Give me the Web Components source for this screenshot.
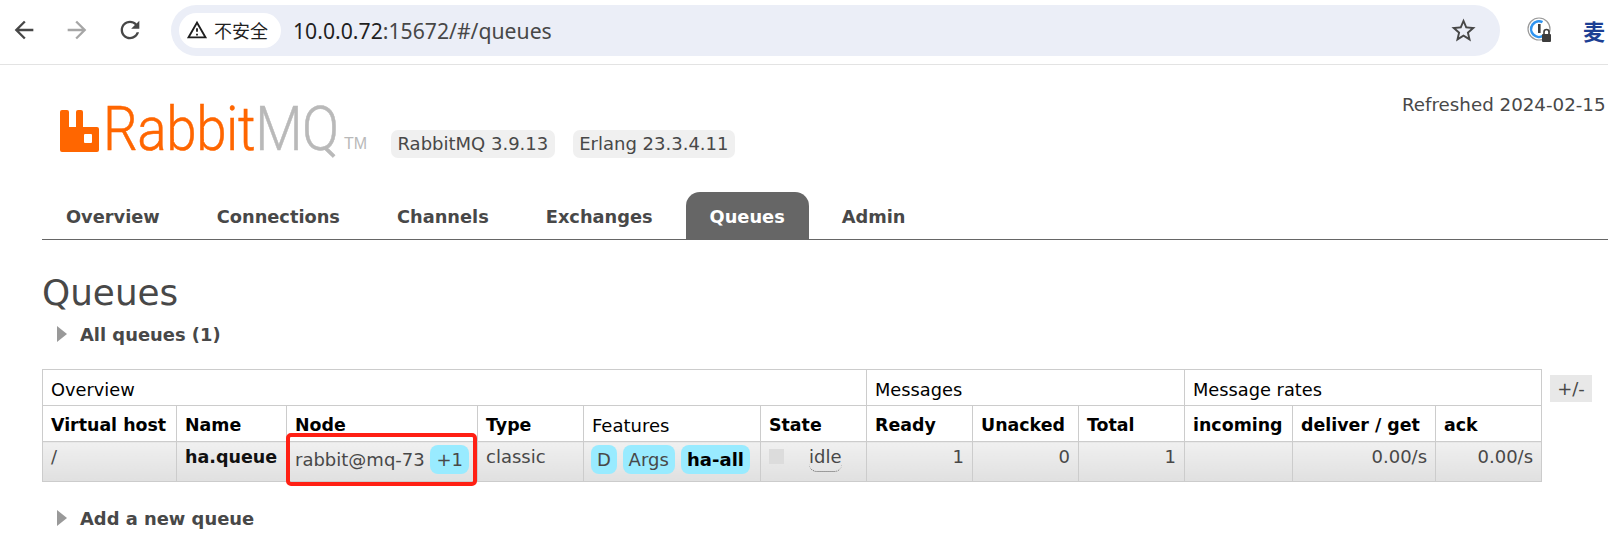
<!DOCTYPE html>
<html>
<head>
<meta charset="utf-8">
<title>RabbitMQ Management</title>
<style>
  html, body { margin: 0; padding: 0; width: 1608px; height: 541px; overflow: hidden; background: #fff; }
  body { font-family: "DejaVu Sans", sans-serif; font-size: 18px; color: #484848; }
</style>
</head>
<body>
<browser-bar url-host="10.0.0.72" url-rest=":15672/#/queues"></browser-bar>
<rmq-header>
  <span slot="refreshed">Refreshed 2024-02-15</span>
  <version-badge>RabbitMQ 3.9.13</version-badge>
  <version-badge>Erlang 23.3.4.11</version-badge>
</rmq-header>
<rmq-tabs>
  <tab-link>Overview</tab-link>
  <tab-link>Connections</tab-link>
  <tab-link>Channels</tab-link>
  <tab-link>Exchanges</tab-link>
  <tab-link active>Queues</tab-link>
  <tab-link>Admin</tab-link>
</rmq-tabs>
<rmq-page heading="Queues">
  <section-toggle>All queues (1)</section-toggle>
  <queue-table></queue-table>
  <section-toggle class="add">Add a new queue</section-toggle>
</rmq-page>

<script>
const ICONS = {
  back: 'M20 11H7.83l5.59-5.59L12 4l-8 8 8 8 1.41-1.41L7.83 13H20v-2z',
  reload: 'M17.65 6.35C16.2 4.9 14.21 4 12 4c-4.42 0-7.99 3.58-7.99 8s3.57 8 7.99 8c3.73 0 6.84-2.55 7.73-6h-2.08c-.82 2.33-3.04 4-5.65 4-3.31 0-6-2.69-6-6s2.69-6 6-6c1.66 0 3.14.69 4.22 1.78L13 11h7V4l-2.35 2.35z',
  warn: 'M1 21h22L12 2 1 21zm3.47-2L12 5.99 19.53 19H4.47zM11 16h2v2h-2zm0-6h2v4h-2z',
  star: 'M22 9.24l-7.19-.62L12 2 9.19 8.63 2 9.24l5.46 4.73L5.82 21 12 17.27 18.18 21l-1.63-7.03L22 9.24zM12 15.4l-3.76 2.27 1-4.28-3.32-2.88 4.38-.38L12 6.1l1.71 4.04 4.38.38-3.32 2.88 1 4.28L12 15.4z'
};

class BrowserBar extends HTMLElement {
  constructor() {
    super();
    this.attachShadow({mode: "open"});
    this.shadowRoot.innerHTML = `
      <style>
        :host { display: flex; align-items: center; height: 65px; box-sizing: border-box; border-bottom: 1px solid #e3e3e3; background: #fff; font-family: "Noto Sans", sans-serif; padding-bottom: 4px; }
        svg { display: block; fill: #474747; }
        .nav { display: flex; gap: 25px; margin-left: 10px; margin-right: 22px; width: 139px; flex: none; }
        .nav .fwd { transform: scaleX(-1); fill: #a6a6a6; }
        .pill { width: 1329px; height: 51px; flex: none; box-sizing: border-box; background: #ebeef7; border-radius: 26px; display: flex; align-items: center; padding: 0 22px 0 8px; }
        .chip { display: flex; align-items: center; gap: 6px; height: 35px; width: 102px; box-sizing: border-box; padding-left: 7px; background: #fff; border-radius: 18px; font: 18px "Noto Sans CJK SC", sans-serif; color: #1f1f1f; flex: none; }
        .chip svg { fill: #1f1f1f; }
        .url { margin-left: 12px; font-size: 21.2px; color: #474747; white-space: nowrap; }
        .url b { font-weight: 400; color: #1f1f1f; }
        .star { margin-left: auto; fill: #474747; }
        .ext { margin-left: 27px; flex: none; }
        .mai { margin-left: 30px; font: 700 22px "Noto Sans CJK SC", serif; color: #1c3f94; flex: none; }
      </style>
      <div class="nav">
        <svg width="28" height="28" viewBox="0 0 24 24"><path d="${ICONS.back}"/></svg>
        <svg class="fwd" width="28" height="28" viewBox="0 0 24 24"><path d="${ICONS.back}"/></svg>
        <svg width="28" height="28" viewBox="0 0 24 24"><path d="${ICONS.reload}"/></svg>
      </div>
      <div class="pill">
        <div class="chip"><svg width="22" height="22" viewBox="0 0 24 24"><path d="${ICONS.warn}"/></svg><span>不安全</span></div>
        <div class="url"><b>${this.getAttribute("url-host")}</b>${this.getAttribute("url-rest")}</div>
        <svg class="star" width="29" height="29" viewBox="0 0 24 24"><path d="${ICONS.star}"/></svg>
      </div>
      <svg class="ext" width="26" height="26" viewBox="0 0 26 26" style="fill:none">
        <circle cx="12" cy="12" r="11" stroke="#9a9a9a" stroke-width="1.2"/>
        <path d="M15.5 5.2A7.8 7.8 0 1 0 16.5 18.5" stroke="#2f94f0" stroke-width="2.6"/>
        <rect x="11" y="7" width="2.6" height="9" fill="#3c3c3c"/>
        <rect x="15" y="17" width="9" height="8" rx="1" fill="#3c3c3c"/>
        <path d="M17 17v-2a2.5 2.5 0 0 1 5 0v2" stroke="#3c3c3c" stroke-width="1.6"/>
      </svg>
      <span class="mai">麦</span>
    `;
  }
}
customElements.define("browser-bar", BrowserBar);

class VersionBadge extends HTMLElement {
  constructor() {
    super();
    this.attachShadow({mode: "open"});
    this.shadowRoot.innerHTML = `
      <style>
        :host { display: block; height: 28px; line-height: 28px; padding: 0 6.5px; background: #f0f0f0; border-radius: 7px; color: #484848; white-space: nowrap; }
      </style>
      <slot></slot>
    `;
  }
}
customElements.define("version-badge", VersionBadge);

class RmqHeader extends HTMLElement {
  constructor() {
    super();
    this.attachShadow({mode: "open"});
    this.shadowRoot.innerHTML = `
      <style>
        :host { display: flex; height: 127px; box-sizing: border-box; padding-left: 60px; position: relative; white-space: nowrap; }
        .logo { display: flex; align-items: flex-end; width: 331px; height: 87px; flex: none; }
        .logo svg { display: block; flex: none; }
        .word { font: 300 62px Roboto, sans-serif; line-height: 46px; height: 46px; margin-left: 4px; width: 237px; flex: none; display: block; transform: scaleX(.883); transform-origin: 0 100%; color: #ff6600; letter-spacing: -.5px; -webkit-text-stroke: .5px; }
        .word i { font-style: normal; color: #b9b9b9; }
        .tm { font: 16px "Liberation Sans", sans-serif; color: #b9b9b9; margin-left: 4px; line-height: 16px; }
        .badges { display: flex; gap: 18px; margin-top: 65px; align-self: flex-start; }
        .refreshed { margin-left: auto; padding-top: 29px; width: 206px; font-size: 18.25px; color: #484848; }
      </style>
      <div class="logo">
        <svg width="39" height="42" viewBox="0 0 39 42"><path fill="#ff6600" fill-rule="evenodd" d="M2 0h5a2 2 0 0 1 2 2v15h7V2a2 2 0 0 1 2-2h3a2 2 0 0 1 2 2v15h14a2 2 0 0 1 2 2v21a2 2 0 0 1-2 2H2a2 2 0 0 1-2-2V2a2 2 0 0 1 2-2zM25 24a1 1 0 0 0-1 1v7a1 1 0 0 0 1 1h6a1 1 0 0 0 1-1v-7a1 1 0 0 0-1-1z"/></svg>
        <span class="word">Rabbit<i>MQ</i></span>
        <span class="tm">TM</span>
      </div>
      <div class="badges"><slot></slot></div>
      <div class="refreshed"><slot name="refreshed"></slot></div>
    `;
  }
}
customElements.define("rmq-header", RmqHeader);

class TabLink extends HTMLElement {
  constructor() {
    super();
    this.attachShadow({mode: "open"});
    this.shadowRoot.innerHTML = `
      <style>
        :host { display: block; height: 47px; line-height: 50px; padding: 0 24px; font-size: 17.8px; font-weight: 700; color: #484848; border-radius: 14px 14px 0 0; }
        :host([active]) { background: #666; color: #fff; }
      </style>
      <slot></slot>
    `;
  }
}
customElements.define("tab-link", TabLink);

class RmqTabs extends HTMLElement {
  constructor() {
    super();
    this.attachShadow({mode: "open"});
    this.shadowRoot.innerHTML = `
      <style>
        :host { display: flex; gap: 9px; margin-left: 42px; height: 48px; box-sizing: border-box; border-bottom: 1px solid #666; }
      </style>
      <slot></slot>
    `;
  }
}
customElements.define("rmq-tabs", RmqTabs);

class RmqPage extends HTMLElement {
  constructor() {
    super();
    this.attachShadow({mode: "open"});
    this.shadowRoot.innerHTML = `
      <style>
        :host { display: block; padding-left: 42px; }
        h1 { margin: 31px 0 0; font-size: 35.8px; font-weight: 400; line-height: 44px; color: #484848; }
      </style>
      <h1>${this.getAttribute("heading")}</h1>
      <slot></slot>
    `;
  }
}
customElements.define("rmq-page", RmqPage);

class SectionToggle extends HTMLElement {
  constructor() {
    super();
    this.attachShadow({mode: "open"});
    this.shadowRoot.innerHTML = `
      <style>
        :host { display: flex; align-items: center; height: 24px; padding-left: 15px; font-size: 17.9px; font-weight: 700; color: #484848; gap: 13px; margin-top: 7px; }
        :host(.add) { margin-top: 24px; }
        .arrow { width: 0; height: 0; border-left: 10px solid #999; border-top: 8px solid transparent; border-bottom: 8px solid transparent; }
      </style>
      <span class="arrow"></span><slot></slot>
    `;
  }
}
customElements.define("section-toggle", SectionToggle);

class FeaturePill extends HTMLElement {
  constructor() {
    super();
    this.attachShadow({mode: "open"});
    this.shadowRoot.innerHTML = `
      <style>
        :host { display: inline-block; height: 29px; line-height: 30px; padding: 0 6px; background: #99ebff; border-radius: 8px; color: #484848; }
        :host(.strong) { font-weight: 700; color: #000; padding: 0 6.5px; }
      </style>
      <slot></slot>
    `;
  }
}
customElements.define("feature-pill", FeaturePill);

class QueueTable extends HTMLElement {
  constructor() {
    super();
    this.attachShadow({mode: "open"});
    this.shadowRoot.innerHTML = `
      <style>
        :host { display: flex; align-items: flex-start; margin-top: 23px; gap: 8px; }
        table { border-collapse: collapse; table-layout: fixed; width: 1499px; flex: none; color: #000; }
        th, td { border: 1px solid #ccc; padding: 0 8px; text-align: left; white-space: nowrap; overflow: visible; }
        thead th { font-size: 17.4px; padding-top: 3px; box-sizing: border-box; }
        thead tr.group th { height: 36px; font-weight: 400; font-size: 17.8px; }
        thead tr.cols th { height: 36px; }
        th.plain { font-weight: 400; font-size: 18px !important; }
        tbody td { height: 40px; padding: 4px 8px 0; box-sizing: border-box; vertical-align: top; line-height: 22px; color: #484848; background: linear-gradient(#f0f0f0, #e0e0e0); }
        td.r { text-align: right; }
        td.b { font-weight: 700; color: #111; font-size: 17.5px; }
        td.node { position: relative; padding-top: 3px; padding-right: 0; }
        td.feat { padding: 3px 0 0 7px; }
        .mark { position: absolute; left: -1px; right: 0; top: -9px; bottom: -5px; border: 4px solid #ff2014; border-radius: 5px; box-sizing: border-box; }
        .node span { line-height: 30px; }
        .status { display: flex; align-items: flex-start; }
        .status i { width: 15px; height: 15px; margin-top: 3px; background: #dcdcdc; flex: none; }
        .status abbr { margin-left: 25px; text-decoration: none; border-bottom: 1px dotted #555; border-radius: 0 0 8px 8px; height: 25px; }
        .toggle { width: 42px; height: 27px; margin-top: 6px; line-height: 28px; text-align: center; background: #e8e8e8; color: #484848; flex: none; }
      </style>
      <table>
        <colgroup>
          <col style="width:134px"><col style="width:110px"><col style="width:191px"><col style="width:106px">
          <col style="width:177px"><col style="width:106px"><col style="width:106px"><col style="width:106px">
          <col style="width:106px"><col style="width:108px"><col style="width:143px"><col style="width:106px">
        </colgroup>
        <thead>
          <tr class="group"><th colspan="6">Overview</th><th colspan="3">Messages</th><th colspan="3">Message rates</th></tr>
          <tr class="cols">
            <th>Virtual host</th><th>Name</th><th>Node</th><th>Type</th><th class="plain">Features</th><th>State</th>
            <th>Ready</th><th>Unacked</th><th>Total</th><th>incoming</th><th>deliver / get</th><th>ack</th>
          </tr>
        </thead>
        <tbody>
          <tr>
            <td>/</td>
            <td class="b">ha.queue</td>
            <td class="node"><span>rabbit@mq-73</span> <feature-pill>+1</feature-pill><div class="mark"></div></td>
            <td>classic</td>
            <td class="feat"><feature-pill>D</feature-pill> <feature-pill>Args</feature-pill> <feature-pill class="strong">ha-all</feature-pill></td>
            <td><div class="status"><i></i><abbr>idle</abbr></div></td>
            <td class="r">1</td><td class="r">0</td><td class="r">1</td>
            <td></td><td class="r">0.00/s</td><td class="r">0.00/s</td>
          </tr>
        </tbody>
      </table>
      <div class="toggle">+/-</div>
    `;
  }
}
customElements.define("queue-table", QueueTable);
</script>
</body>
</html>
